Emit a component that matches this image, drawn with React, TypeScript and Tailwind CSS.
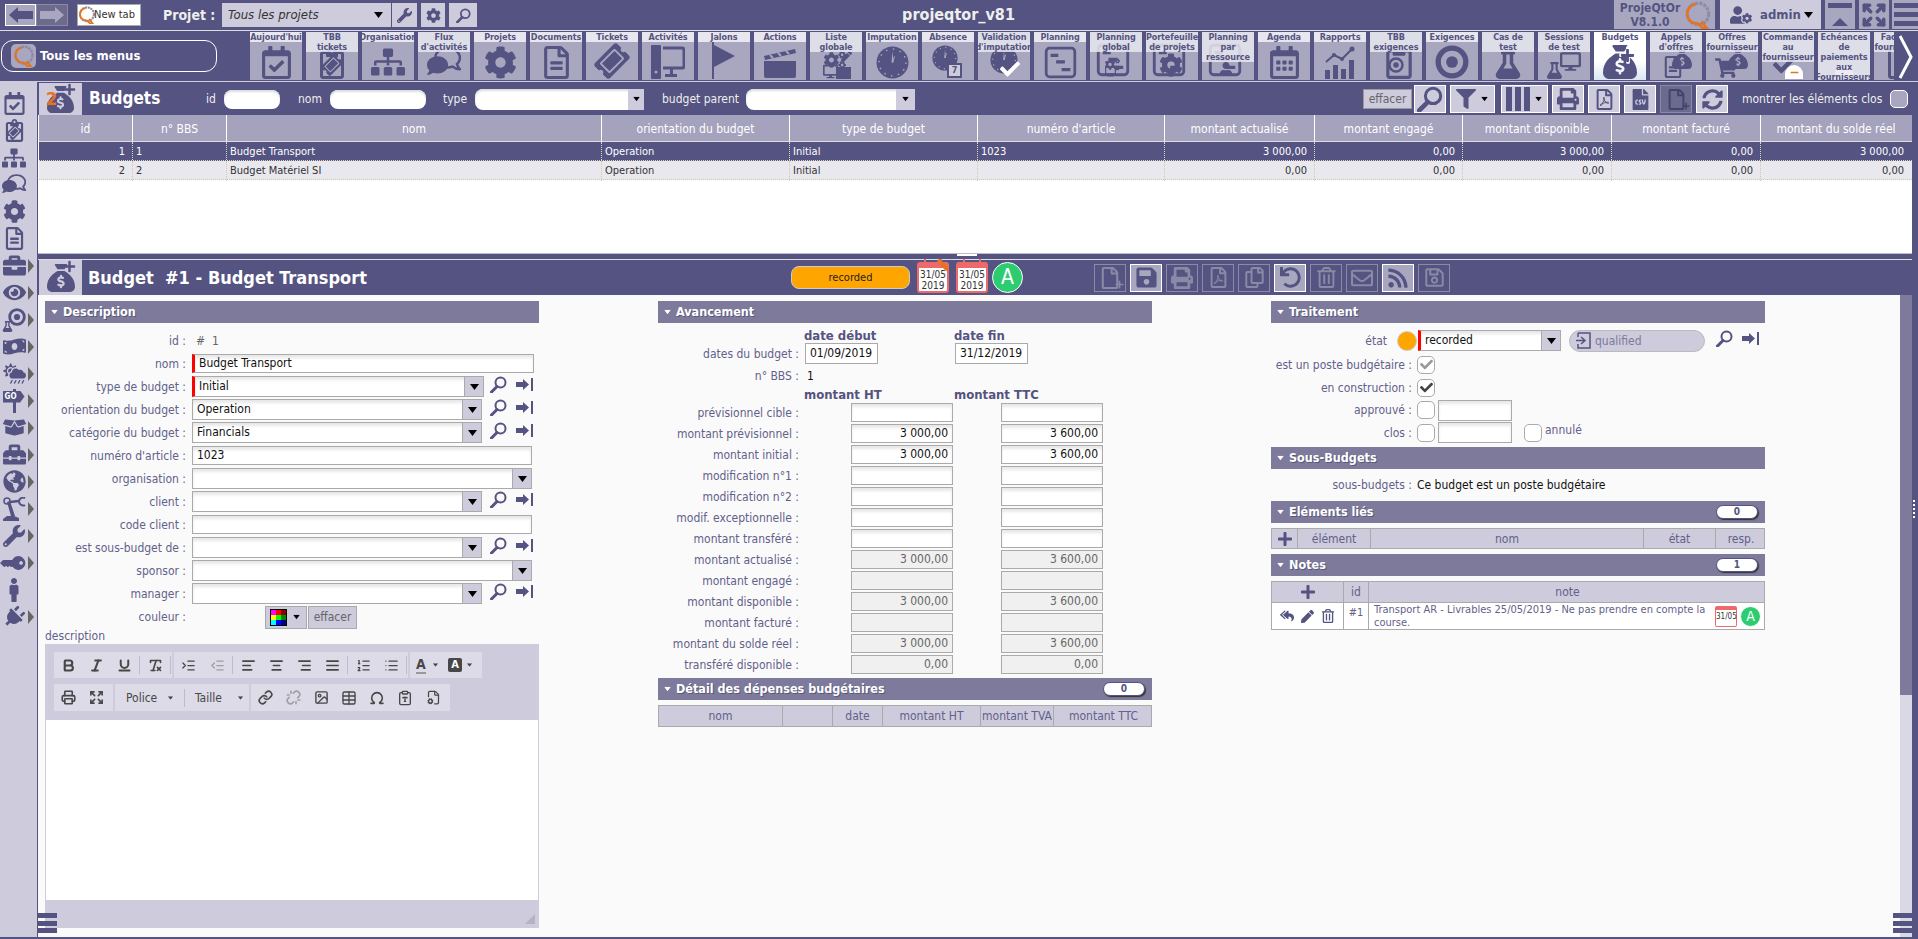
import type { ReactNode } from "react"
import {
  FaBoxOpen, FaBriefcase, FaCheck, FaCloudSunRain, FaCog, FaCogs, FaComment, FaDesktop, FaEye,
  FaFileCsv, FaFilter, FaFlask, FaGlobeAmericas, FaKey, FaMale, FaMinus, FaMoneyBillWave, FaPen, FaPlug, FaPlus,
  FaPrint, FaRegCalendarAlt, FaRegCalendarCheck, FaRegClipboard, FaRegComment, FaRegCopy, FaRegEnvelope, FaRegFile,
  FaRegFileAlt, FaRegFilePdf, FaRegSave, FaRegTrashAlt, FaReplyAll, FaRss, FaSave, FaShoppingCart,
  FaSitemap, FaSyncAlt, FaTicketAlt, FaToolbox, FaUndo, FaUser, FaUserCog, FaWrench,
} from "react-icons/fa"
import { FaSackDollar } from "react-icons/fa6"
import {
  AlignCenter, AlignJustify, AlignLeft, AlignRight, Bold, ClipboardType, Expand, FileCog, Image, Indent, Italic, Link, List,
  ListOrdered, Omega, Outdent, Printer, RemoveFormatting, Table, Underline, Unlink,
} from "lucide-react"

const DARK = "#545381"

function Tri({ className = "" }: { className?: string }) {
  return (
    <svg width="9" height="6" viewBox="0 0 9 6" className={className}>
      <path d="M0 0h9L4.5 6z" fill="currentColor" />
    </svg>
  )
}

function Logo({ size = 26 }: { size?: number }) {
  return (
    <svg width={size} height={size} viewBox="0 0 26 26">
      <circle cx="13" cy="12" r="10" fill="none" stroke="#8d8ca5" strokeWidth="3" strokeDasharray="3 1" />
      <path d="M11 3a9 9 0 0 0-3 17l5 1 4 4h4l-5-6" fill="none" stroke="#e8731f" strokeWidth="2.4" />
    </svg>
  )
}

function SearchIco({ size = 17, color = DARK }: { size?: number; color?: string }) {
  return (
    <svg width={size} height={size} viewBox="0 0 17 17">
      <circle cx="10.5" cy="6.5" r="5" fill="none" stroke={color} strokeWidth="2" />
      <path d="M7 10.5 1.5 16" stroke={color} strokeWidth="3" strokeLinecap="round" />
    </svg>
  )
}

function GotoIco() {
  return (
    <svg width="17" height="13" viewBox="0 0 17 13">
      <path d="M0 4h7V1l6 5.500-6 5.500V9H0z" fill={DARK} />
      <path d="M15 0h2v13h-2z" fill={DARK} />
    </svg>
  )
}

function Stack({ children }: { children: ReactNode }) {
  return <div className="relative w-[40px] h-[36px]">{children}</div>
}

function Gantt({ size = 30 }: { size?: number }) {
  return (
    <svg width={size} height={size} viewBox="0 0 30 30">
      <rect x="2" y="2" width="26" height="26" rx="3" fill="none" stroke={DARK} strokeWidth="2.500" />
      <path d="M6 7h7v3H6zM11 13h8v3h-8zM16 20h8v3h-8z" fill={DARK} />
    </svg>
  )
}

function Target({ size = 32 }: { size?: number }) {
  return (
    <svg width={size} height={size} viewBox="0 0 32 32">
      <circle cx="16" cy="16" r="13" fill="none" stroke={DARK} strokeWidth="5" />
      <circle cx="16" cy="16" r="5.500" fill={DARK} />
    </svg>
  )
}

function Flag() {
  return (
    <svg width="26" height="38" viewBox="0 0 26 38">
      <path d="M1 0h2v38H1z" fill={DARK} />
      <path d="M3 4l21 11-21 11z" fill={DARK} />
    </svg>
  )
}

function Clap() {
  return (
    <svg width="34" height="32" viewBox="0 0 34 32">
      <path d="M1 14h32v15a2 2 0 0 1-2 2H3a2 2 0 0 1-2-2z" fill={DARK} />
      <path d="M1 9 32 2l1 4-31 7z" fill={DARK} />
      <path d="M7 8l3 3M15 6l3 3M23 4l3 3" stroke="#a9a7bf" strokeWidth="2" />
    </svg>
  )
}

function Chart() {
  return (
    <svg width="34" height="34" viewBox="0 0 34 34">
      <path d="M2 25h5v9H2zM10 20h5v14h-5zM18 24h5v10h-5zM26 15h5v19h-5z" fill={DARK} />
      <path d="M3 17l8-7 8 4 10-10" fill="none" stroke={DARK} strokeWidth="2" />
      <circle cx="11" cy="10" r="2" fill={DARK} />
      <circle cx="19" cy="14" r="2" fill={DARK} />
      <circle cx="29" cy="4" r="2.500" fill={DARK} />
    </svg>
  )
}

// round dark clock with a ring of small ticks, as in the imputation icons
function ClockIco({ size = 33, className = "" }: { size?: number; className?: string }) {
  return (
    <svg width={size} height={size} viewBox="0 0 32 32" className={className}>
      <circle cx="16" cy="16" r="15.500" fill={DARK} />
      <circle cx="16" cy="16" r="13" fill="none" stroke="#a9a7bf" strokeWidth="1.500" strokeDasharray="1.400 5.400" />
      <path d="M16 5l1 11h-2z" fill="#a9a7bf" />
      <path d="M16 16l2-6" stroke="#a9a7bf" strokeWidth="1" />
    </svg>
  )
}

function Computer() {
  return (
    <svg width="34" height="34" viewBox="0 0 34 34">
      <path d="M0 1a1 1 0 0 1 1-1h8a1 1 0 0 1 1 1v32a1 1 0 0 1-1 1H1a1 1 0 0 1-1-1z" fill={DARK} />
      <circle cx="5" cy="27" r="1.500" fill="#a9a7bf" />
      <path d="M12 3h19a2 2 0 0 1 2 2v16a2 2 0 0 1-2 2H12" fill="none" stroke={DARK} strokeWidth="3" />
      <path d="M14 29h12v3H14z" fill={DARK} />
      <path d="M19 23h3v7h-3z" fill={DARK} />
    </svg>
  )
}

function RobotArm() {
  return (
    <svg width="24" height="24" viewBox="0 0 24 24">
      <path d="M1 24h16v-3l-5-2H5l-4 3z" fill={DARK} />
      <path d="M5 5l3-1 5 15H9z" fill={DARK} />
      <circle cx="5" cy="4" r="3" fill="none" stroke={DARK} strokeWidth="1.500" />
      <path d="M8 5l9-1" stroke={DARK} strokeWidth="2.500" />
      <path d="M23 1a4 4 0 1 0 0 7" fill="none" stroke={DARK} strokeWidth="2" />
    </svg>
  )
}

function GoSign() {
  return (
    <div className="relative w-[23px] h-[24px] flex justify-center">
      <div className="w-[3px] h-full bg-[#545381]" />
      <div className="absolute left-0 top-[2px] w-[22px] h-[12px] bg-[#545381] text-[8px] leading-[12px] text-white font-bold pl-[2px] [clip-path:polygon(0_0,80%_0,100%_50%,80%_100%,0_100%)]">
        GO
      </div>
    </div>
  )
}

function FluxIco({ size = 34 }: { size?: number }) {
  return (
    <div className="relative" style={{ width: size, height: size }}>
      <FaRegComment size={size * 0.8} color={DARK} className="absolute right-0 top-0 -scale-x-100" />
      <FaComment size={size * 0.62} color={DARK} className="absolute left-0 bottom-[3px]" />
    </div>
  )
}

function ClipTicket({ size = 30 }: { size?: number }) {
  return (
    <div className="relative" style={{ width: size, height: size }}>
      <FaRegClipboard size={size} color={DARK} />
      <FaTicketAlt size={size * 0.62} color={DARK} className="absolute left-[18%] top-[24%] -rotate-45" />
    </div>
  )
}

function Bag({ size = 26 }: { size?: number }) {
  return <FaSackDollar size={size} color={DARK} />
}

function Tile({ lines, active, children }: { lines: string[]; active?: boolean; children: ReactNode }) {
  return (
    <div
      className={`relative shrink-0 w-[52px] h-[48px] overflow-hidden ${
        active ? "bg-linear-to-b from-white from-60% to-[#dbe6f2]" : "bg-[#a9a7bf]"
      }`}
    >
      <div className="absolute inset-x-0 bottom-px flex justify-center items-end">{children}</div>
      <div
        className={`absolute inset-x-0 top-0 text-center text-[9px] leading-[10px] font-bold tracking-[-0.1px] whitespace-nowrap text-[#545381] ${
          active ? "" : lines.length > 1 ? "bg-[#e8e7ef]/85" : "bg-[#e8e7ef]"
        }`}
      >
        {lines.map((l) => (
          <div key={l} className="flex justify-center">
            {l}
          </div>
        ))}
      </div>
    </div>
  )
}

const c = DARK
const tiles: { lines: string[]; icon: ReactNode; active?: boolean }[] = [
  { lines: ["Aujourd'hui"], icon: <FaRegCalendarCheck size={33} color={c} /> },
  { lines: ["TBB", "tickets"], icon: <ClipTicket size={32} /> },
  { lines: ["Organisation"], icon: <FaSitemap size={34} color={c} /> },
  { lines: ["Flux", "d'activités"], icon: <FluxIco /> },
  { lines: ["Projets"], icon: <FaCog size={33} color={c} /> },
  { lines: ["Documents"], icon: <FaRegFileAlt size={33} color={c} /> },
  { lines: ["Tickets"], icon: <FaTicketAlt size={32} color={c} className="-rotate-45 mb-[2px]" /> },
  { lines: ["Activités"], icon: <Computer /> },
  { lines: ["Jalons"], icon: <Flag /> },
  { lines: ["Actions"], icon: <Clap /> },
  {
    lines: ["Liste", "globale"],
    icon: (
      <Stack>
        <FaCogs size={22} color={c} className="absolute left-[8px] top-[6px]" />
        <FaDesktop size={15} color={c} className="absolute left-[7px] bottom-0" />
        <FaPen size={11} color={c} className="absolute right-[4px] top-[8px]" />
        <div className="absolute right-[5px] bottom-0 w-[15px] h-[12px] bg-[#545381]" />
      </Stack>
    ),
  },
  { lines: ["Imputation"], icon: <ClockIco size={33} /> },
  {
    lines: ["Absence"],
    icon: (
      <Stack>
        <ClockIco size={26} className="absolute left-[4px] top-[2px]" />
        <div className="absolute right-[6px] bottom-px w-[15px] h-[15px] bg-[#cdcbdc] border-2 border-[#545381] text-[9px] leading-[11px] text-center font-bold text-[#545381]">
          7
        </div>
      </Stack>
    ),
  },
  {
    lines: ["Validation", "d'imputation"],
    icon: (
      <Stack>
        <ClockIco size={28} className="absolute left-[6px] top-[3px]" />
        <FaCheck size={20} color="#fff" className="absolute right-[4px] bottom-0" />
      </Stack>
    ),
  },
  { lines: ["Planning"], icon: <Gantt size={33} /> },
  {
    lines: ["Planning", "global"],
    icon: (
      <Stack>
        <Gantt size={34} />
        <FaCogs size={15} color={c} className="absolute left-[9px] top-[14px]" />
        <FaDesktop size={11} color={c} className="absolute left-[9px] bottom-[2px]" />
      </Stack>
    ),
  },
  {
    lines: ["Portefeuille", "de projets"],
    icon: (
      <Stack>
        <Gantt size={34} />
        <FaCog size={24} color={c} className="absolute left-[7px] top-[10px]" />
      </Stack>
    ),
  },
  {
    lines: ["Planning", "par", "ressource"],
    icon: (
      <Stack>
        <Gantt size={34} />
        <FaUser size={14} color={c} className="absolute left-[11px] bottom-[3px]" />
      </Stack>
    ),
  },
  { lines: ["Agenda"], icon: <FaRegCalendarAlt size={33} color={c} /> },
  { lines: ["Rapports"], icon: <Chart /> },
  {
    lines: ["TBB", "exigences"],
    icon: (
      <Stack>
        <FaRegClipboard size={34} color={c} className="absolute left-[6px] top-[2px]" />
        <div className="absolute left-[12px] top-[14px]">
          <Target size={16} />
        </div>
      </Stack>
    ),
  },
  { lines: ["Exigences"], icon: <Target size={34} /> },
  { lines: ["Cas de", "test"], icon: <FaFlask size={28} color={c} /> },
  {
    lines: ["Sessions", "de test"],
    icon: (
      <Stack>
        <FaFlask size={17} color={c} className="absolute left-[2px] bottom-0" />
        <FaDesktop size={21} color={c} className="absolute right-[3px] top-[8px]" />
      </Stack>
    ),
  },
  {
    lines: ["Budgets"],
    active: true,
    icon: (
      <Stack>
        <FaSackDollar size={34} color={c} className="absolute left-[3px] bottom-0" />
        <FaPlus size={20} color="#fff" className="absolute right-[2px] top-[2px]" />
        <FaPlus size={15} color={c} className="absolute right-[5px] top-[5px]" />
      </Stack>
    ),
  },
  {
    lines: ["Appels", "d'offres"],
    icon: (
      <Stack>
        <FaRegFileAlt size={22} color={c} className="absolute left-[6px] bottom-[1px]" />
        <div className="absolute right-[4px] top-[6px]">
          <Bag size={20} />
        </div>
      </Stack>
    ),
  },
  {
    lines: ["Offres", "fournisseur"],
    icon: (
      <Stack>
        <FaShoppingCart size={22} color={c} className="absolute left-[3px] bottom-0" />
        <div className="absolute right-[4px] top-[6px]">
          <Bag size={20} />
        </div>
      </Stack>
    ),
  },
  {
    lines: ["Commande", "au", "fournisseur"],
    icon: (
      <Stack>
        <FaCheck size={22} color={c} className="absolute left-[5px] bottom-[3px]" />
        <div className="absolute right-[5px] bottom-0 w-[18px] h-[14px] bg-white rounded-t-full flex items-center justify-center">
          <FaMinus size={9} color="#e8731f" />
        </div>
      </Stack>
    ),
  },
  {
    lines: ["Echéances", "de", "paiements", "aux", "Fournisseurs"],
    icon: <div className="w-[18px] h-[14px] bg-white rounded-t-full" />,
  },
  {
    lines: ["Factures", "fournisseur"],
    icon: <FaRegFileAlt size={32} color={c} />,
  },
]

function Field({ w, value = "", red, gray, right }: { w: string; value?: string; red?: boolean; gray?: boolean; right?: boolean }) {
  return (
    <div
      className={`${w} h-[19px] shrink-0 border border-[#aaaaaa] text-[12px] leading-[17px] px-[4px] truncate ${
        red ? "border-l-[3px] border-l-[#ff0000]" : ""
      } ${right ? "text-right" : ""} ${
        gray ? "bg-[#f0f0f0] text-[#666]" : "bg-white text-[#111] shadow-[inset_0_3px_3px_#e8e8e8]"
      }`}
    >
      {value}
    </div>
  )
}

function Select({ w, value = "", red }: { w: string; value?: string; red?: boolean }) {
  return (
    <div
      className={`${w} h-[21px] shrink-0 flex border border-[#aaaaaa] bg-white shadow-[inset_0_3px_3px_#e8e8e8] ${
        red ? "border-l-[3px] border-l-[#ff0000]" : ""
      }`}
    >
      <div className="flex-1 px-[4px] text-[12px] leading-[19px] text-[#111]">{value}</div>
      <div className="w-[19px] bg-[#cdcbdc] border-l border-[#aaaaaa] flex items-center justify-center text-black">
        <Tri />
      </div>
    </div>
  )
}

function Label({ w = "w-[141px]", children }: { w?: string; children: ReactNode }) {
  return <div className={`${w} shrink-0 text-right text-[12px] whitespace-nowrap text-[#63618a]`}>{children}</div>
}

function Row({ label, children, h = "h-[23px]" }: { label: string; children?: ReactNode; h?: string }) {
  return (
    <div className={`${h} flex items-center gap-[6px]`}>
      <Label>{label} :</Label>
      {children}
    </div>
  )
}

function Links({ gap = "ml-[8px]" }: { gap?: string }) {
  return (
    <div className={`flex items-center gap-[9px] ${gap} -translate-y-[2px]`}>
      <SearchIco />
      <GotoIco />
    </div>
  )
}

function Section({ title, badge }: { title: string; badge?: string }) {
  return (
    <div className="h-[22px] bg-[#7d7a9b] flex items-center pl-[5px] pr-[7px] shrink-0">
      <Tri className="text-white scale-75 mr-[4px]" />
      <span className="text-[12.5px] font-bold text-white [text-shadow:1px_1px_0_#5a5878]">{title}</span>
      {badge && (
        <span className="ml-auto w-[42px] h-[14px] rounded-full bg-white border border-[#545381] shadow-[1px_1px_1px_#333] text-center text-[10px] leading-[11px] font-bold text-[#545381]">
          {badge}
        </span>
      )}
    </div>
  )
}

function Th({ children, className = "" }: { children?: ReactNode; className?: string }) {
  return (
    <div className={`flex items-center justify-center border-r border-[#aaaaaa] last:border-r-0 text-[12px] text-[#63618a] ${className}`}>
      {children}
    </div>
  )
}

function ToolBtn({ children, on, w = "w-[32px]" }: { children: ReactNode; on?: boolean; w?: string }) {
  return (
    <div
      className={`${w} h-[28px] shrink-0 flex items-center justify-center border ${
        on ? "border-white bg-[#a9a7bf]" : "border-[#8a89a6]"
      }`}
    >
      {children}
    </div>
  )
}

function FilterBtn({ children, w = "w-[32px]", off }: { children: ReactNode; w?: string; off?: boolean }) {
  return (
    <div
      className={`${w} h-[28px] shrink-0 flex items-center justify-center gap-[4px] border ${
        off ? "border-[#8a89a6] bg-[#6c6b8e]" : "border-white bg-[#cdcbdc]"
      }`}
    >
      {children}
    </div>
  )
}

function CalBox({ pencil }: { pencil?: boolean }) {
  return (
    <div className="relative w-[32px] h-[31px] rounded-[3px] bg-white border-2 border-t-[6px] border-[#ee6a6a] flex flex-col items-center justify-center text-[10px] leading-[11px] text-[#333]">
      <div className="absolute left-[5px] top-[-9px] w-[2px] h-[6px] bg-[#ee6a6a]" />
      <div className="absolute right-[5px] top-[-9px] w-[2px] h-[6px] bg-[#ee6a6a]" />
      <span>31/05</span>
      <span>2019</span>
      {pencil && <FaPen size={12} color="#e8731f" className="absolute right-[-2px] top-[-9px] -scale-x-100" />}
    </div>
  )
}

function Avatar({ size, text }: { size: string; text: string }) {
  return (
    <div className={`${size} rounded-full bg-[#2ecc71] border border-white text-white flex items-center justify-center ${text}`}>A</div>
  )
}

function Check({ on, dim }: { on?: boolean; dim?: boolean }) {
  return (
    <div className="w-[18px] h-[18px] shrink-0 rounded-[5px] border border-[#aaaaaa] bg-white flex items-center justify-center">
      {on && <FaCheck size={13} color={dim ? "#999" : "#444"} />}
    </div>
  )
}

function EdBtn({ children, w = "w-[28px]" }: { children: ReactNode; w?: string }) {
  return <div className={`${w} h-full flex items-center justify-center text-[#474747]`}>{children}</div>
}

function Sep() {
  return <div className="w-px h-[18px] bg-[#bcbccb] mx-px shrink-0" />
}

const ico = { size: 15, strokeWidth: 2.6 }

function Editor() {
  return (
    <div className="w-[494px] h-[284px] bg-[#cdcbdc] flex flex-col">
      <div className="h-[76px] pt-[8px] pl-[9px] flex flex-col gap-[6px]">
        <div className="h-[26px] flex items-center">
          <div className="h-full bg-[#dcdbe7] flex items-center">
            <EdBtn><Bold {...ico} strokeWidth={3.4} /></EdBtn>
            <EdBtn><Italic {...ico} strokeWidth={3.4} /></EdBtn>
            <EdBtn><Underline {...ico} strokeWidth={3.2} /></EdBtn>
            <Sep />
            <EdBtn><RemoveFormatting {...ico} /></EdBtn>
            <Sep />
          </div>
          <div className="h-full ml-[2px] bg-[#dcdbe7] flex items-center">
            <EdBtn w="w-[29px]"><Indent size={15} strokeWidth={2} /></EdBtn>
            <EdBtn w="w-[28px]"><span className="opacity-40"><Outdent size={15} strokeWidth={2} /></span></EdBtn>
            <Sep />
            <EdBtn><AlignLeft {...ico} /></EdBtn>
            <EdBtn><AlignCenter {...ico} /></EdBtn>
            <EdBtn><AlignRight {...ico} /></EdBtn>
            <EdBtn><AlignJustify {...ico} /></EdBtn>
            <Sep />
            <EdBtn><ListOrdered size={15} strokeWidth={2} /></EdBtn>
            <EdBtn><List size={15} strokeWidth={2} /></EdBtn>
            <Sep />
          </div>
          <div className="h-full ml-[2px] w-[72px] bg-[#dcdbe7] flex items-center justify-between pl-[6px] pr-[8px] text-[#474747]">
            <span className="flex items-center gap-[5px]">
              <span className="text-[14px] font-bold leading-[15px] border-b-[2px] border-[#999]">A</span>
              <Tri className="scale-[0.6]" />
            </span>
            <span className="flex items-center gap-[3px]">
              <span className="w-[14px] h-[14px] rounded-[2px] bg-[#474747] text-white text-[11px] font-bold leading-[14px] text-center">A</span>
              <Tri className="scale-[0.6]" />
            </span>
          </div>
        </div>
        <div className="h-[27px] flex items-center">
          <div className="h-full w-[59px] bg-[#dcdbe7] flex items-center">
            <EdBtn><Printer {...ico} /></EdBtn>
            <EdBtn><Expand {...ico} /></EdBtn>
          </div>
          <div className="h-full ml-[2px] w-[134px] bg-[#dcdbe7] flex items-center text-[12px] text-[#474747]">
            <div className="w-[68px] flex items-center justify-between pl-[11px] pr-[8px]">
              Police <Tri className="scale-[0.6]" />
            </div>
            <Sep />
            <div className="w-[62px] flex items-center justify-between pl-[9px] pr-[3px]">
              Taille <Tri className="scale-[0.6]" />
            </div>
          </div>
          <div className="h-full ml-[2px] w-[199px] bg-[#dcdbe7] flex items-center pl-[0px]">
            <EdBtn><Link {...ico} /></EdBtn>
            <EdBtn><span className="opacity-40"><Unlink {...ico} /></span></EdBtn>
            <EdBtn><Image size={15} strokeWidth={2.2} /></EdBtn>
            <EdBtn><Table size={16} strokeWidth={2} /></EdBtn>
            <EdBtn><Omega size={16} strokeWidth={2.4} /></EdBtn>
            <EdBtn><ClipboardType size={16} strokeWidth={2} /></EdBtn>
            <EdBtn><FileCog size={15} strokeWidth={2} /></EdBtn>
          </div>
        </div>
      </div>
      <div className="h-[180px] mx-px bg-white" />
      <div className="flex-1 flex items-end justify-end p-[4px]">
        <svg width="10" height="10" viewBox="0 0 10 10">
          <path d="M10 0v10H0z" fill="#b4b3c4" />
        </svg>
      </div>
    </div>
  )
}

function Burger() {
  return (
    <div className="w-[20px] h-[20px] flex flex-col justify-between">
      <div className="h-[5px] bg-[#545381]" />
      <div className="h-[5px] bg-[#545381]" />
      <div className="h-[5px] bg-[#545381]" />
    </div>
  )
}

const amounts: { label: string; ht?: string; ttc?: string; gray?: boolean }[] = [
  { label: "prévisionnel cible" },
  { label: "montant prévisionnel", ht: "3 000,00", ttc: "3 600,00" },
  { label: "montant initial", ht: "3 000,00", ttc: "3 600,00" },
  { label: "modification n°1" },
  { label: "modification n°2" },
  { label: "modif. exceptionnelle" },
  { label: "montant transféré" },
  { label: "montant actualisé", ht: "3 000,00", ttc: "3 600,00", gray: true },
  { label: "montant engagé", gray: true },
  { label: "montant disponible", ht: "3 000,00", ttc: "3 600,00", gray: true },
  { label: "montant facturé", gray: true },
  { label: "montant du solde réel", ht: "3 000,00", ttc: "3 600,00", gray: true },
  { label: "transféré disponible", ht: "0,00", ttc: "0,00", gray: true },
]

const listCols = "grid-cols-[94px_94px_375px_188px_188px_187px_150px_148px_149px_149px_150px]"
const listHead = [
  "id", "n° BBS", "nom", "orientation du budget", "type de budget", "numéro d'article", "montant actualisé",
  "montant engagé", "montant disponible", "montant facturé", "montant du solde réel",
]
const listRows = [
  ["1", "1", "Budget Transport", "Operation", "Initial", "1023", "3 000,00", "0,00", "3 000,00", "0,00", "3 000,00"],
  ["2", "2", "Budget Matériel SI", "Operation", "Initial", "", "0,00", "0,00", "0,00", "0,00", "0,00"],
]
const rightAligned = [0, 6, 7, 8, 9, 10]

const sideIcons: ReactNode[] = [
  <FaRegCalendarCheck size={23} color={c} />,
  <ClipTicket size={23} />,
  <FaSitemap size={24} color={c} />,
  <FluxIco size={24} />,
  <FaCog size={23} color={c} />,
  <FaRegFileAlt size={23} color={c} />,
  <FaBriefcase size={23} color={c} />,
  <FaEye size={23} color={c} />,
  <div className="relative w-[24px] h-[24px]">
    <div className="absolute right-0 top-0"><Target size={18} /></div>
    <FaFlask size={11} color={c} className="absolute left-0 bottom-0" />
  </div>,
  <FaMoneyBillWave size={23} color={c} />,
  <FaCloudSunRain size={23} color={c} />,
  <GoSign />,
  <FaBoxOpen size={23} color={c} />,
  <FaToolbox size={23} color={c} />,
  <FaGlobeAmericas size={23} color={c} />,
  <RobotArm />,
  <FaWrench size={22} color={c} />,
  <FaKey size={20} color={c} className="rotate-[45deg]" />,
  <FaMale size={24} color={c} />,
  <FaPlug size={22} color={c} className="rotate-45" />,
]

export default function App() {
  return (
    <div className="relative w-[1918px] h-[939px] overflow-hidden flex flex-col bg-[#545381] pb-[2px] font-['DejaVu_Sans_Condensed','DejaVu_Sans',sans-serif]">
      {/* top bar */}
      <div className="h-[30px] shrink-0 flex">
        <div className="flex-1 flex items-start pt-[4px] pl-[5px]">
          <div className="flex h-[22px]">
            <div className="w-[31px] border border-white bg-[#a9a7bf] flex items-center justify-center">
              <svg width="24" height="16" viewBox="0 0 24 16"><path d="M0 8l9-8v4h15v8H9v4z" fill={c} /></svg>
            </div>
            <div className="w-[32px] border border-[#8a89a6] bg-[#6c6b8e] flex items-center justify-center">
              <svg width="24" height="16" viewBox="0 0 24 16"><path d="M24 8l-9-8v4H0v8h15v4z" fill="#a9a7bf" /></svg>
            </div>
          </div>
          <div className="ml-[9px] w-[64px] h-[22px] bg-white border border-[#aaa] flex items-center overflow-hidden text-[11px] text-[#333] whitespace-nowrap">
            <Logo size={18} />
            <span className="-ml-[2px]">New tab</span>
          </div>
          <span className="ml-[22px] w-[59px] text-[14px] leading-[22px] font-bold text-[#eeeeee] whitespace-nowrap">Projet :</span>
          <div className="h-[24px] -mt-px w-[169px] bg-[#cdcbdc] flex items-center justify-between pl-[6px] pr-[8px] text-[13px] italic text-[#333]">
            Tous les projets <Tri className="text-black not-italic" />
          </div>
          <div className="h-[24px] -mt-px ml-px w-[25px] bg-[#cdcbdc] flex items-center justify-center"><FaWrench size={15} color={c} /></div>
          <div className="h-[24px] -mt-px ml-[4px] w-[24px] bg-[#cdcbdc] flex items-center justify-center"><FaCog size={15} color={c} /></div>
          <div className="h-[24px] -mt-px ml-[4px] w-[28px] bg-[#cdcbdc] flex items-center justify-center"><SearchIco size={15} /></div>
        </div>
        <div className="flex items-center -translate-x-[3px] text-[16px] font-bold text-[#eeeeee]">projeqtor_v81</div>
        <div className="flex-1 flex justify-end items-start pr-0">
          <div className="w-[101px] h-[29px] bg-[#a9a7bf] flex items-center pl-[2px] text-[12px] leading-[14px] font-bold text-[#545381]">
            <div className="text-center w-[68px]">ProjeQtOr<br />V8.1.0</div>
            <Logo size={28} />
          </div>
          <div className="ml-[5px] w-[101px] h-[29px] bg-[#cdcbdc] flex items-center pl-[10px] text-[13px] font-bold text-[#545381]">
            <FaUserCog size={22} />
            <span className="ml-[8px]">admin</span>
            <Tri className="ml-auto mr-[8px] text-black" />
          </div>
          <div className="ml-[4px] w-[30px] h-[29px] bg-[#a9a7bf] flex flex-col items-center justify-between py-[3px]">
            <div className="w-[24px] h-[5px] bg-[#545381]" />
            <svg width="16" height="8" viewBox="0 0 16 8"><path d="M8 0l8 8H0z" fill={c} /></svg>
          </div>
          <div className="ml-[4px] w-[30px] h-[29px] bg-[#a9a7bf] flex items-center justify-center">
            <Expand size={26} color={c} strokeWidth={3.2} />
          </div>
          <div className="ml-[3px] w-[26px] h-[29px] bg-[#a9a7bf] flex flex-col justify-between py-[3px] pl-[2px]">
            <div className="h-[5px] bg-[#545381]" />
            <div className="h-[5px] bg-[#545381]" />
            <div className="h-[5px] bg-[#545381]" />
          </div>
        </div>
      </div>
      <div className="h-px shrink-0 bg-[#dddddd]" />
      {/* menu row */}
      <div className="h-[50px] shrink-0 flex pt-px">
        <div className="w-[250px] shrink-0 pt-[8px] pl-px">
          <div className="w-[216px] h-[32px] rounded-[12px] border border-white flex items-center pl-[9px] text-[13px] font-bold text-white">
            <div className="w-[25px] h-[24px] rounded-[5px] bg-[#a9a7bf] flex items-center justify-center mr-[4px]"><Logo size={22} /></div>
            Tous les menus
          </div>
        </div>
        <div className="flex-1 flex gap-[4px] overflow-hidden">
          {tiles.map((t) => (
            <Tile key={t.lines.join(" ")} lines={t.lines} active={t.active}>
              {t.icon}
            </Tile>
          ))}
        </div>
        <div className="w-[24px] shrink-0 flex items-center justify-center bg-[#545381]">
          <svg width="14" height="44" viewBox="0 0 14 44"><path d="M1 1l11 21L1 43" fill="none" stroke="#fff" strokeWidth="3" /></svg>
        </div>
      </div>
      <div className="h-px shrink-0 bg-[#cdcbdc]" />
      {/* body */}
      <div className="flex-1 flex min-h-0">
        <div className="w-[37px] shrink-0 bg-[#cdcbdc] pt-[8px]">
          {sideIcons.map((icon, i) => (
            <div key={i} className="h-[27px] flex items-center pl-[2px]">
              <div className="w-[24px] flex items-center justify-center">{icon}</div>
              {i >= 6 && i !== 18 && (
                <svg width="6" height="14" viewBox="0 0 6 14" className="ml-[2px]"><path d="M0 0l6 7-6 7z" fill="#666" /></svg>
              )}
            </div>
          ))}
        </div>
        <div className="w-px shrink-0 bg-[#545381]" />
        <div className="w-[1874px] flex flex-col">
          {/* list */}
          <div className="h-[171px] shrink-0 flex flex-col bg-white">
            <div className="h-[33px] pt-px shrink-0 flex items-center bg-[#545381] text-[12px] text-[#eeeeee]">
              <div className="ml-px w-[43px] h-[32px] bg-[#cdcbdc] relative flex items-center justify-center shrink-0">
                <FaSackDollar size={27} color={c} />
                <FaPlus size={13} color={c} className="absolute right-[6px] top-0" />
                <span className="absolute left-[7px] top-[7px] text-[18px] leading-[18px] font-bold text-[#e8731f]">2</span>
              </div>
              <span className="ml-[7px] w-[117px] text-[17px] font-bold text-white">Budgets</span>
              <span className="w-[18px]">id</span>
              <div className="w-[56px] h-[19px] rounded-[8px] bg-white shadow-[inset_0_2px_2px_#ddd]" />
              <span className="ml-[18px] w-[32px]">nom</span>
              <div className="w-[96px] h-[19px] rounded-[8px] bg-white shadow-[inset_0_2px_2px_#ddd]" />
              <span className="ml-[17px] w-[32px]">type</span>
              <div className="w-[169px] h-[21px] rounded-l-[8px] bg-white flex justify-end shadow-[inset_0_2px_2px_#ddd]">
                <div className="w-[16px] bg-[#cdcbdc] flex items-center justify-center text-black"><Tri className="scale-75" /></div>
              </div>
              <span className="ml-[18px] w-[84px] whitespace-nowrap">budget parent</span>
              <div className="w-[169px] h-[21px] rounded-l-[8px] bg-white flex justify-end shadow-[inset_0_2px_2px_#ddd]">
                <div className="w-[19px] bg-[#cdcbdc] flex items-center justify-center text-black"><Tri className="scale-75" /></div>
              </div>
              <div className="ml-[448px] w-[49px] h-[20px] bg-[#cdcbdc] border border-[#999] text-[12px] leading-[18px] text-center text-[#666] shrink-0">effacer</div>
              <div className="ml-[2px] flex items-center">
                <FilterBtn><SearchIco size={26} /></FilterBtn>
                <div className="ml-[4px]"><FilterBtn w="w-[45px]"><FaFilter size={20} color={c} /><Tri className="text-black scale-75" /></FilterBtn></div>
                <div className="ml-[6px]">
                  <FilterBtn w="w-[47px]">
                    <svg width="24" height="24" viewBox="0 0 24 24"><path d="M0 0h6v24H0zM9 0h6v24H9zM18 0h6v24h-6z" fill={c} /></svg>
                    <Tri className="text-black scale-75" />
                  </FilterBtn>
                </div>
                <div className="ml-[4px] flex gap-[4px]">
                  <FilterBtn><FaPrint size={22} color={c} /></FilterBtn>
                  <FilterBtn><FaRegFilePdf size={21} color={c} /></FilterBtn>
                  <FilterBtn><FaFileCsv size={21} color={c} /></FilterBtn>
                  <FilterBtn off>
                    <div className="relative"><FaRegFile size={21} color="#44436a" /><FaPlus size={8} color="#44436a" className="absolute right-[-3px] bottom-0" /></div>
                  </FilterBtn>
                  <FilterBtn><FaSyncAlt size={21} color={c} /></FilterBtn>
                </div>
              </div>
              <span className="ml-[14px] whitespace-nowrap">montrer les éléments clos</span>
              <div className="ml-[8px] w-[18px] h-[18px] rounded-[5px] border border-white bg-[#a9a7bf] shrink-0" />
            </div>
            <div className={`ml-px grid ${listCols} h-[27px] shrink-0 border-b border-[#dddddd] bg-[#a5a2bd]`}>
              {listHead.map((h) => (
                <div key={h} className="flex items-center justify-center pt-[2px] border-r border-white last:border-r-0 text-[12px] text-white whitespace-nowrap">
                  {h}
                </div>
              ))}
            </div>
            {listRows.map((r, i) => (
              <div
                key={r[0]}
                className={`ml-px grid ${listCols} h-[19px] shrink-0 border-b border-dotted text-[11px] leading-[20px] ${
                  i === 0 ? "bg-[#545381] text-white border-[#dfd8b8]" : "bg-[#e9e8ef] text-[#333] border-[#cfc9b0]"
                }`}
              >
                {r.map((v, j) => (
                  <div
                    key={j}
                    className={`border-r border-dotted last:border-r-0 px-[3px] whitespace-nowrap ${
                      i === 0 ? "border-[#dfd8b8]" : "border-[#cfc9b0]"
                    } ${rightAligned.includes(j) ? "text-right pr-[7px]" : ""}`}
                  >
                    {v}
                  </div>
                ))}
              </div>
            ))}
          </div>
          {/* splitter */}
          <div className="h-[6px] shrink-0 relative bg-[#545381] border-t border-[#bbbbcc]">
            <div className="absolute left-[919px] top-0 w-[20px] h-[2px] bg-white" />
          </div>
          <div className="h-px shrink-0 bg-[#dddddd]" />
          {/* detail header */}
          <div className="h-[35px] shrink-0 flex items-center text-white">
            <div className="ml-px w-[43px] h-[35px] bg-[#cdcbdc] relative flex items-center justify-center shrink-0">
              <FaSackDollar size={28} color={c} />
              <FaPlus size={13} color={c} className="absolute right-[6px] top-0" />
            </div>
            <span className="ml-[6px] w-[703px] text-[18px] font-bold whitespace-pre">Budget  #1 - Budget Transport</span>
            <div className="w-[119px] h-[23px] rounded-[8px] bg-[#ffa500] border border-[#cccccc] text-[11px] leading-[21px] text-center text-[#222] shrink-0">
              recorded
            </div>
            <div className="ml-[7px]"><CalBox pencil /></div>
            <div className="ml-[7px]"><CalBox /></div>
            <div className="ml-[4px] shrink-0"><Avatar size="w-[31px] h-[31px]" text="text-[21px]" /></div>
            <div className="ml-[71px] flex gap-[4px]">
              <ToolBtn>
                <div className="relative"><FaRegFile size={22} color="#8a89a6" /><FaPlus size={9} color="#8a89a6" className="absolute right-[-3px] bottom-0" /></div>
              </ToolBtn>
              <ToolBtn on><FaSave size={23} color={c} /></ToolBtn>
              <ToolBtn><FaPrint size={22} color="#8a89a6" /></ToolBtn>
              <ToolBtn><FaRegFilePdf size={21} color="#8a89a6" /></ToolBtn>
              <ToolBtn><FaRegCopy size={21} color="#8a89a6" /></ToolBtn>
              <ToolBtn on><FaUndo size={21} color={c} /></ToolBtn>
              <ToolBtn><FaRegTrashAlt size={21} color="#8a89a6" /></ToolBtn>
              <ToolBtn><FaRegEnvelope size={22} color="#8a89a6" /></ToolBtn>
              <ToolBtn on><FaRss size={22} color={c} /></ToolBtn>
              <ToolBtn><FaRegSave size={21} color="#8a89a6" /></ToolBtn>
            </div>
          </div>
          {/* detail body */}
          <div className="flex-1 min-h-0 flex bg-[#fafafa]">
            <div className="flex-1 flex pl-[7px] pt-[6px] gap-[119px]">
              {/* Description */}
              <div className="w-[494px] shrink-0">
                <Section title="Description" />
                <div className="mt-[6px]">
                  <Row label="id">
                    <span className="text-[12px] text-[#666] ml-[4px] whitespace-pre">#  1</span>
                  </Row>
                  <Row label="nom"><Field w="w-[342px]" value="Budget Transport" red /></Row>
                  <Row label="type de budget"><Select w="w-[292px]" value="Initial" red /><Links gap="ml-[0px]" /></Row>
                  <Row label="orientation du budget"><Select w="w-[290px]" value="Operation" /><Links gap="ml-[2px]" /></Row>
                  <Row label="catégorie du budget"><Select w="w-[290px]" value="Financials" /><Links gap="ml-[2px]" /></Row>
                  <Row label="numéro d'article"><Field w="w-[340px]" value="1023" /></Row>
                  <Row label="organisation"><Select w="w-[340px]" /></Row>
                  <Row label="client"><Select w="w-[290px]" /><Links gap="ml-[2px]" /></Row>
                  <Row label="code client"><Field w="w-[340px]" /></Row>
                  <Row label="est sous-budget de"><Select w="w-[290px]" /><Links gap="ml-[2px]" /></Row>
                  <Row label="sponsor"><Select w="w-[340px]" /></Row>
                  <Row label="manager"><Select w="w-[290px]" /><Links gap="ml-[2px]" /></Row>
                  <Row label="couleur" h="h-[24px]">
                    <div className="ml-[73px] w-[42px] h-[23px] bg-[#cdcbdc] border border-[#aaa] flex items-center gap-[5px] pl-[4px]">
                      <div className="grid grid-cols-3 w-[17px] h-[17px] bg-black p-px">
                        {["#f0f", "#f00", "#800", "#ff0", "#0f0", "#080", "#0ff", "#00f", "#008"].map((col) => (
                          <div key={col} className="w-[5px] h-[5px]" style={{ background: col }} />
                        ))}
                      </div>
                      <Tri className="text-black scale-75" />
                    </div>
                    <div className="-ml-[5px] w-[49px] h-[23px] bg-[#cdcbdc] border border-[#aaa] text-[12px] leading-[21px] text-center text-[#666]">effacer</div>
                  </Row>
                </div>
                <div className="h-[15px] text-[12px] leading-[15px] text-[#63618a]">description</div>
                <Editor />
              </div>
              {/* Avancement */}
              <div className="w-[494px] shrink-0">
                <Section title="Avancement" />
                <div className="mt-[5px] h-[15px] flex text-[13px] leading-[15px] font-bold text-[#545381]">
                  <span className="ml-[146px] w-[150px]">date début</span>
                  <span>date fin</span>
                </div>
                <div className="h-[21px] flex items-center gap-[6px]">
                  <Label>dates du budget :</Label>
                  <div className="flex gap-[77px]">
                    <div className="w-[73px] h-[21px] border border-[#aaa] bg-white text-[12px] leading-[19px] px-[4px] text-[#111]">01/09/2019</div>
                    <div className="w-[73px] h-[21px] border border-[#aaa] bg-white text-[12px] leading-[19px] px-[4px] text-[#111]">31/12/2019</div>
                  </div>
                </div>
                <div className="h-[24px] flex items-center gap-[6px]">
                  <Label>n° BBS :</Label>
                  <span className="text-[12px] text-[#111] ml-[2px]">1</span>
                </div>
                <div className="h-[14px] flex text-[13px] leading-[14px] font-bold text-[#545381] whitespace-nowrap">
                  <span className="ml-[146px] w-[150px]">montant HT</span>
                  <span>montant TTC</span>
                </div>
                {amounts.map((a) => (
                  <div key={a.label} className="h-[21px] flex items-center gap-[6px]">
                    <Label>{a.label} :</Label>
                    <div className="ml-[46px] flex gap-[48px]">
                      <Field w="w-[102px]" value={a.ht} gray={a.gray} right />
                      <Field w="w-[102px]" value={a.ttc} gray={a.gray} right />
                    </div>
                  </div>
                ))}
                <div className="mt-[3px]"><Section title="Détail des dépenses budgétaires" badge="0" /></div>
                <div className="mt-[5px] h-[22px] grid grid-cols-[124px_50px_50px_98px_73px_99px] border border-[#aaa] bg-[#cdcbdc]">
                  {["nom", "", "date", "montant HT", "montant TVA", "montant TTC"].map((h, i) => (
                    <Th key={i}>{h}</Th>
                  ))}
                </div>
              </div>
              {/* Traitement */}
              <div className="w-[494px] shrink-0">
                <Section title="Traitement" />
                <div className="mt-[5px] h-[25px] flex items-center">
                  <Label w="w-[116px]">état</Label>
                  <div className="ml-[10px] w-[20px] h-[20px] rounded-full bg-[#ffa500] border border-[#ccc] shrink-0" />
                  <div className="ml-px"><Select w="w-[143px]" value="recorded" red /></div>
                  <div className="ml-[8px] w-[136px] h-[22px] rounded-full bg-[#cdcbdc] border border-[#bbb] flex items-center pl-[5px] text-[12px] text-[#7d7a9b] shrink-0">
                    <svg width="17" height="17" viewBox="0 0 17 17" className="mr-[3px]">
                      <path d="M3 1h12v15H3v-4M3 5V1" fill="none" stroke={c} strokeWidth="1.500" />
                      <path d="M1 8.500h8M6 5l4 3.500L6 12" fill="none" stroke={c} strokeWidth="1.500" />
                    </svg>
                    qualified
                  </div>
                  <Links gap="ml-[11px]" />
                </div>
                <div className="h-[23px] flex items-center gap-[5px]"><Label>est un poste budgétaire :</Label><Check on dim /></div>
                <div className="h-[23px] flex items-center gap-[5px]"><Label>en construction :</Label><Check on /></div>
                <div className="h-[22px] flex items-center gap-[5px]">
                  <Label>approuvé :</Label><Check />
                  <div className="-ml-[2px]"><Field w="w-[74px] !h-[21px]" /></div>
                </div>
                <div className="h-[23px] flex items-center gap-[5px]">
                  <Label>clos :</Label><Check />
                  <div className="-ml-[2px]"><Field w="w-[74px] !h-[21px]" /></div>
                  <div className="ml-[7px]"><Check /></div>
                  <span className="-ml-[2px] -translate-y-[3px] text-[12px] text-[#63618a]">annulé</span>
                </div>
                <div className="mt-[3px]"><Section title="Sous-Budgets" /></div>
                <div className="h-[32px] flex items-center gap-[5px]">
                  <Label>sous-budgets :</Label>
                  <span className="text-[12px] text-[#111]">Ce budget est un poste budgétaire</span>
                </div>
                <Section title="Eléments liés" badge="0" />
                <div className="mt-[5px] h-[21px] grid grid-cols-[26px_73px_273px_72px_50px] border border-[#aaa] bg-[#cdcbdc]">
                  <Th><FaPlus size={16} color={c} /></Th>
                  <Th>élément</Th>
                  <Th>nom</Th>
                  <Th>état</Th>
                  <Th>resp.</Th>
                </div>
                <div className="mt-[5px]"><Section title="Notes" badge="1" /></div>
                <div className="mt-[5px] border border-[#aaa]">
                  <div className="h-[21px] grid grid-cols-[72px_25px_397px] bg-[#cdcbdc] border-b border-[#aaa]">
                    <Th><FaPlus size={16} color={c} /></Th>
                    <Th>id</Th>
                    <Th>note</Th>
                  </div>
                  <div className="h-[26px] grid grid-cols-[72px_25px_397px] bg-white">
                    <div className="flex items-center justify-center gap-[7px] border-r border-[#aaa]">
                      <FaReplyAll size={14} color={c} />
                      <FaPen size={13} color={c} />
                      <FaRegTrashAlt size={14} color={c} />
                    </div>
                    <div className="border-r border-[#aaa] text-[11px] text-[#63618a] text-center pt-[2px]">#1</div>
                    <div className="flex pl-[5px] pr-[5px]">
                      <div className="flex-1 text-[11px] leading-[13px] text-[#63618a]">
                        Transport AR - Livrables 25/05/2019 - Ne pas prendre en compte la course.
                      </div>
                      <div className="flex items-center gap-[3px] ml-[5px]">
                        <div className="w-[22px] h-[21px] border border-t-[4px] border-[#ee6a6a] rounded-[2px] text-[8px] leading-[14px] text-center text-[#333]">31/05</div>
                        <Avatar size="w-[21px] h-[21px]" text="text-[14px]" />
                      </div>
                    </div>
                  </div>
                </div>
              </div>
            </div>
            <div className="w-[12px] shrink-0 flex flex-col">
              <div className="h-[400px] bg-[#7d7a9b]" />
              <div className="flex-1 bg-[#d9d8e5]" />
            </div>
          </div>
        </div>
        <div className="flex-1 relative">
          <div className="absolute left-px top-[418px] w-[2px] h-[20px] bg-[repeating-linear-gradient(#fff_0_2px,transparent_2px_4px)]" />
        </div>
      </div>
      <div className="absolute left-[37px] top-[913px]"><Burger /></div>
      <div className="absolute left-[1893px] top-[913px]"><Burger /></div>
    </div>
  )
}
